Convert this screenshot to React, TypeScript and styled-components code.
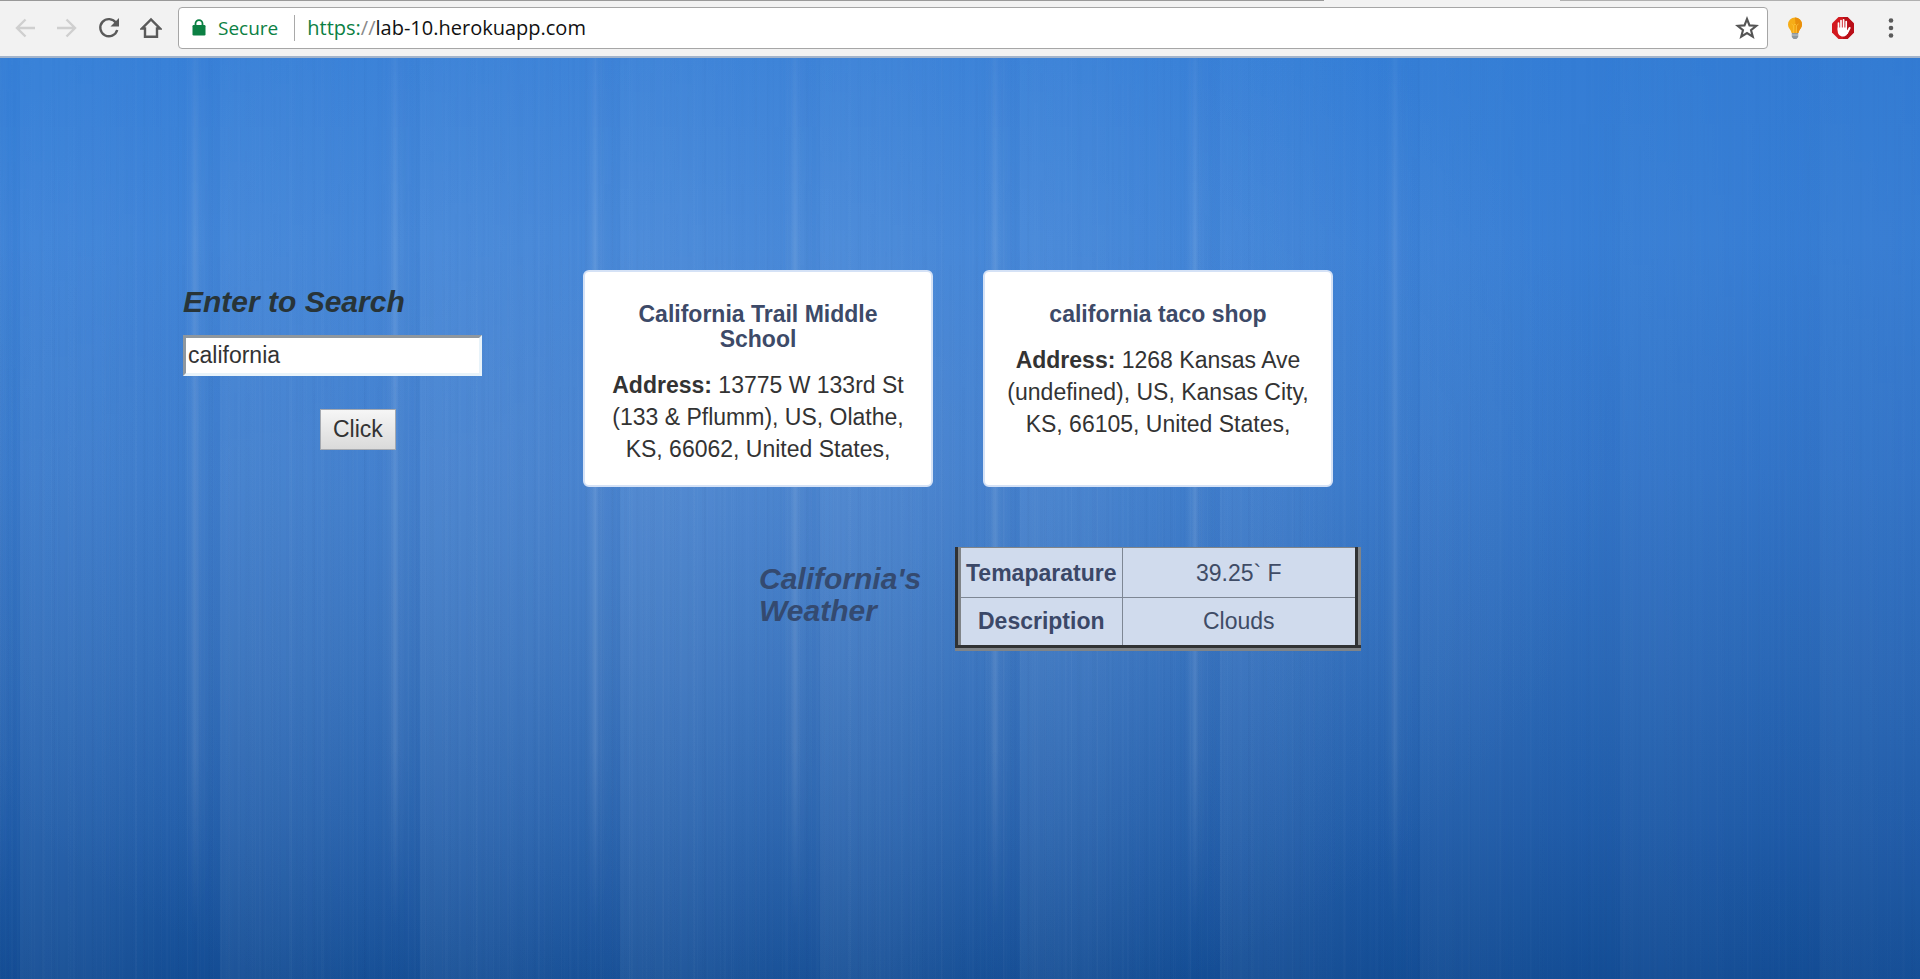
import React, { useState } from "react";
import styled, { createGlobalStyle } from "styled-components";

const GlobalStyle = createGlobalStyle`
  * { box-sizing: border-box; }
  html, body { margin: 0; }
  body {
    font-family: "Liberation Sans", Arial, sans-serif;
    font-size: 23px;
    line-height: 32px;
    color: #333;
  }
`;

const Screen = styled.div`
  min-height: 100vh;
  display: flex;
  flex-direction: column;
`;

const TabEdge = styled.div`
  display: flex;
  height: 1px;
  background: #f2f2f2;
`;

const TabEdgeLine = styled.span<{ $share: number; $color: string }>`
  flex: ${(p) => p.$share} 0 0;
  background: ${(p) => p.$color};
`;

const Toolbar = styled.header`
  display: flex;
  align-items: center;
  height: 57px;
  padding: 0 5px 2px 4px;
  background: #f2f2f2;
  border-bottom: 2px solid #a3b4cb;
`;

const NavButtons = styled.nav`
  display: flex;
`;

const ToolButton = styled.button<{ $muted?: boolean }>`
  display: flex;
  align-items: center;
  justify-content: center;
  width: 42px;
  height: 42px;
  padding: 0;
  border: 0;
  background: none;
  color: ${(p) => (p.$muted ? "#cfcfcf" : "#5a5a5a")};
`;

const AddressBar = styled.div`
  flex: 1;
  display: flex;
  align-items: center;
  height: 42px;
  margin-left: 6px;
  padding: 0 8px 0 13px;
  background: #fff;
  border: 1px solid #a6a6a6;
  border-radius: 4px;
  font-family: "Open Sans", "Noto Sans", sans-serif;
  font-size: 20px;
  line-height: 26px;
`;

const Secure = styled.span`
  display: flex;
  align-items: center;
  gap: 12px;
  padding-right: 16px;
  border-right: 1px solid #a9a9a9;
  font-size: 19px;
  color: #0b8043;
`;

const Url = styled.a`
  flex: 1;
  margin-left: 12px;
  color: #111;
  text-decoration: none;
`;

const Scheme = styled.span`
  color: #0b8043;
`;

const Slashes = styled.span`
  color: #8a8a8a;
`;

const StarButton = styled.button`
  display: flex;
  padding: 0;
  border: 0;
  background: none;
`;

const Extensions = styled.div`
  display: flex;
  align-items: center;
  margin-left: 3px;
`;

const ExtensionButton = styled(ToolButton)`
  width: 48px;
`;

const Page = styled.main`
  flex: 1;
  position: relative;
  isolation: isolate;
  padding: 212px 0 48px 183px;
  background:
    radial-gradient(ellipse 46% 66% at 38% 44%, rgba(125, 165, 220, 0.34), rgba(110, 155, 215, 0) 100%),
    linear-gradient(90deg, rgba(0, 60, 150, 0) 60%, rgba(0, 60, 150, 0.08) 100%),
    linear-gradient(180deg, #3680d8 0%, #3b82d8 20%, #3678cb 45%, #2e6cba 65%, #225eaa 83%, #154e95 100%);
`;

/* Long soft curtains of light that repeat across the backdrop. */
const Curtains = styled.div`
  position: absolute;
  inset: 0;
  z-index: -1;
  background:
    repeating-linear-gradient(90deg, rgba(255, 255, 255, 0.014) 0 1px, transparent 1px 7px, rgba(0, 30, 90, 0.014) 7px 9px, transparent 9px 17px),
    repeating-linear-gradient(90deg, transparent 0 11px, rgba(255, 255, 255, 0.014) 11px 13px, transparent 13px 23px, rgba(0, 30, 90, 0.02) 23px 24px, transparent 24px 31px),
    repeating-linear-gradient(90deg, rgba(0, 30, 90, 0.012) 0 3px, transparent 3px 5px, rgba(255, 255, 255, 0.012) 5px 6px, transparent 6px 13px),
    linear-gradient(90deg, rgba(255, 255, 255, 0.045) 0, rgba(255, 255, 255, 0.03) 70px, rgba(255, 255, 255, 0) 150px, rgba(0, 50, 130, 0.03) 200px) 20px 0 / 200px 100%;
  mask-image:
    linear-gradient(180deg, rgba(0, 0, 0, 0.4) 0%, #000 45%),
    linear-gradient(90deg, #000 60%, rgba(0, 0, 0, 0.5) 80%);
  mask-composite: intersect;
`;

const Streaks = styled.div`
  position: absolute;
  inset: 0;
  z-index: -1;
  background: linear-gradient(90deg, transparent 0, transparent 164px, rgba(255, 255, 255, 0.04) 171px, rgba(255, 255, 255, 0.12) 175px, rgba(255, 255, 255, 0.04) 179px, rgba(255, 255, 255, 0.02) 186px, transparent 194px) 20px 0 / 200px 100%;
  mask-image:
    linear-gradient(180deg, rgba(0, 0, 0, 0.4) 0%, #000 20%, #000 75%, transparent 95%),
    linear-gradient(90deg, #000 72%, transparent 76%);
  mask-composite: intersect;
`;

const Content = styled.div`
  display: flex;
  align-items: flex-start;
`;

const SearchForm = styled.form`
  display: flex;
  flex-direction: column;
  align-items: flex-start;
  width: 400px;
  padding-top: 16px;
`;

const Heading = styled.h3<{ $tone?: string }>`
  margin: 0;
  font-size: 30px;
  line-height: 32px;
  font-style: italic;
  font-weight: bold;
  color: ${(p) => p.$tone ?? "#283438"};
`;

const SearchInput = styled.input`
  width: 299px;
  height: 41px;
  margin-top: 17px;
  padding: 0 2px;
  background: #fff;
  border: 3px solid;
  border-color: #8f979e #e8f3fa #e8f3fa #8f979e;
  font: inherit;
  color: #333;
`;

const SubmitButton = styled.button`
  height: 41px;
  margin: 33px 0 0 137px;
  padding: 0 12px 2px;
  background: linear-gradient(#f6f6f6, #dadada);
  border: 1px solid #a5a9b0;
  font: inherit;
  color: #333;
`;

const Results = styled.div`
  display: flex;
  flex-direction: column;
`;

const CardRow = styled.section`
  display: flex;
  gap: 50px;
`;

const Card = styled.article`
  width: 350px;
  padding: 30px 20px 20px;
  background: #fff;
  border: 2px solid #d5e2f6;
  border-radius: 6px;
  text-align: center;
`;

const CardTitle = styled.h4`
  margin: 0 0 17px;
  font-size: 23px;
  line-height: 25px;
  color: #3d4a68;
`;

const CardText = styled.p`
  margin: 0;
`;

const WeatherRow = styled.section`
  display: flex;
  align-items: flex-start;
  margin: 60px 0 0 176px;
`;

const WeatherHeading = styled(Heading)`
  width: 196px;
  padding-top: 16px;
`;

const WeatherTable = styled.table`
  width: 406px;
  border-collapse: collapse;
  border: 6px groove #808488;
  border-top: 1px solid #808488;
  background: #d0dbed;
  color: #3f4c66;
  text-align: center;
`;

const WeatherLine = styled.tr`
  height: 50px;
  border-bottom: 1px solid #7e8794;
  &:last-child { border-bottom: 0; }
`;

const WeatherLabel = styled.th`
  width: 164px;
  padding: 0;
  border-right: 1px solid #7e8794;
  color: #3b4868;
`;

const WeatherValue = styled.td`
  padding: 0;
`;

const stroke = { fill: "none", stroke: "currentColor", strokeWidth: 2.4 } as const;

const BackIcon = () => (
  <svg width="20" height="20" viewBox="0 0 20 20" {...stroke}><path d="M20 10H2M10.500 1.500L2 10l8.500 8.500" /></svg>
);
const ForwardIcon = () => (
  <svg width="20" height="20" viewBox="0 0 20 20" {...stroke}><path d="M0 10h18M9.500 1.500L18 10l-8.500 8.500" /></svg>
);
const ReloadIcon = () => (
  <svg width="22" height="22" viewBox="0 0 22 22" {...stroke}>
    <path d="M18 5.800A8.600 8.600 0 1 0 19.200 13" />
    <path d="M21 1v8.500h-8.500z" fill="currentColor" stroke="none" />
  </svg>
);
const HomeIcon = () => (
  <svg width="22" height="22" viewBox="0 0 22 22" {...stroke}><path d="M2 11.500h3v8.300h12v-8.300h3L11 2.500z" /></svg>
);
const LockIcon = () => (
  <svg width="14" height="17" viewBox="0 0 14 17">
    <rect x="0.500" y="6" width="13" height="10.500" rx="1.200" fill="#0b8043" />
    <path d="M3.500 7V4.600a3.500 3.500 0 0 1 7 0V7" fill="none" stroke="#0b8043" strokeWidth="1.800" />
  </svg>
);
const StarIcon = () => (
  <svg width="24" height="24" viewBox="0 0 24 24">
    <path d="M12 3l2.500 6.400 6.800.400-5.300 4.300 1.800 6.600L12 17l-5.800 3.700L8 14.100 2.700 9.800l6.800-.400z" fill="none" stroke="#555" strokeWidth="2.100" />
  </svg>
);
const BulbIcon = () => (
  <svg width="16" height="24" viewBox="0 0 16 24">
    <path d="M8 1.500a7 7 0 0 0-7 7c0 3 1.700 4.200 2.800 6.200.5 1 .5 1.800.8 2.300h6.800c.3-.5.300-1.300.8-2.300C13.300 12.700 15 11.500 15 8.500a7 7 0 0 0-7-7z" fill="#f6ad17" />
    <path d="M8 1.500a7 7 0 0 1 7 7c0 3-1.700 4.200-2.800 6.200-.5 1-.5 1.800-.8 2.300H9z" fill="#e98f0c" />
    <path d="M4.500 8l2 1.500L8 8l1.500 1.500 2-1.500M6.500 9.500V17M9.500 9.500V17" fill="none" stroke="#fbbd35" strokeWidth="0.900" />
    <path d="M4.800 17h6.400v4l-1.700 2h-3l-1.700-2z" fill="#8d969c" />
    <path d="M4.800 19h6.400" stroke="#c9ced1" strokeWidth="0.900" />
  </svg>
);
const StopHandIcon = () => (
  <svg width="24" height="24" viewBox="0 0 24 24">
    <path d="M7.500 1h9L23 7.500v9L16.500 23h-9L1 16.500v-9z" fill="#d3191f" />
    <path d="M12 1h4.500L23 7.500v9L16.500 23H12z" fill="#b90f18" />
    <g stroke="#fff" strokeWidth="1.700" strokeLinecap="round" fill="none">
      <path d="M7.500 14V7M10 12V4.500M12.600 12V3.800M15.200 13V5.500" />
      <path d="M18.600 12l-2.600 5" strokeWidth="2" />
    </g>
    <path d="M6.700 11.500h9.300v2.500l1.500 1c-1 3-2 5.500-5.500 5.500-3.300 0-5.300-2.500-5.300-5.500z" fill="#fff" />
  </svg>
);
const MenuIcon = () => (
  <svg width="6" height="22" viewBox="0 0 6 22" fill="#5a5a5a">
    <circle cx="3" cy="3.500" r="2.300" /><circle cx="3" cy="11" r="2.300" /><circle cx="3" cy="18.500" r="2.300" />
  </svg>
);

const places = [
  { name: "California Trail Middle School", address: "13775 W 133rd St (133 & Pflumm), US, Olathe, KS, 66062, United States," },
  { name: "california taco shop", address: "1268 Kansas Ave (undefined), US, Kansas City, KS, 66105, United States," },
];

const weather = [
  { label: "Temaparature", value: "39.25` F" },
  { label: "Description", value: "Clouds" },
];

export default function App() {
  const [query, setQuery] = useState("california");

  return (
    <Screen>
      <GlobalStyle />
      <TabEdge>
        <TabEdgeLine $share={1324} $color="#999" />
        <TabEdgeLine $share={236} $color="#f2f2f2" />
        <TabEdgeLine $share={360} $color="#b0b0b0" />
      </TabEdge>
      <Toolbar>
        <NavButtons>
          <ToolButton $muted aria-label="Back"><BackIcon /></ToolButton>
          <ToolButton $muted aria-label="Forward"><ForwardIcon /></ToolButton>
          <ToolButton aria-label="Reload"><ReloadIcon /></ToolButton>
          <ToolButton aria-label="Home"><HomeIcon /></ToolButton>
        </NavButtons>
        <AddressBar>
          <Secure><LockIcon />Secure</Secure>
          <Url href="#"><Scheme>https:</Scheme><Slashes>//</Slashes>lab-10.herokuapp.com</Url>
          <StarButton aria-label="Bookmark this page"><StarIcon /></StarButton>
        </AddressBar>
        <Extensions>
          <ExtensionButton aria-label="Tips"><BulbIcon /></ExtensionButton>
          <ExtensionButton aria-label="Ad blocker"><StopHandIcon /></ExtensionButton>
          <ExtensionButton aria-label="Menu"><MenuIcon /></ExtensionButton>
        </Extensions>
      </Toolbar>
      <Page>
        <Curtains />
        <Streaks />
        <Content>
          <SearchForm onSubmit={(e: React.FormEvent) => e.preventDefault()}>
            <Heading as="label" htmlFor="search">Enter to Search</Heading>
            <SearchInput id="search" type="text" value={query} onChange={(e) => setQuery(e.target.value)} />
            <SubmitButton type="submit">Click</SubmitButton>
          </SearchForm>
          <Results>
            <CardRow>
              {places.map((place) => (
                <Card key={place.name}>
                  <CardTitle>{place.name}</CardTitle>
                  <CardText><b>Address:</b> {place.address}</CardText>
                </Card>
              ))}
            </CardRow>
            <WeatherRow>
              <WeatherHeading $tone="#344a70">California's Weather</WeatherHeading>
              <WeatherTable>
                <tbody>
                  {weather.map((line) => (
                    <WeatherLine key={line.label}>
                      <WeatherLabel scope="row">{line.label}</WeatherLabel>
                      <WeatherValue>{line.value}</WeatherValue>
                    </WeatherLine>
                  ))}
                </tbody>
              </WeatherTable>
            </WeatherRow>
          </Results>
        </Content>
      </Page>
    </Screen>
  );
}
